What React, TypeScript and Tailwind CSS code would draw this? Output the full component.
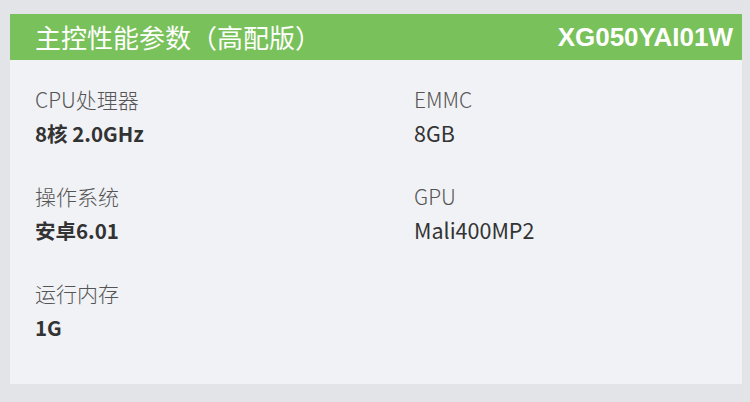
const specs = [
  { label: "CPU处理器", value: "8核 2.0GHz", bold: true },
  { label: "EMMC", value: "8GB", bold: false },
  { label: "操作系统", value: "安卓6.01", bold: true },
  { label: "GPU", value: "Mali400MP2", bold: false },
  { label: "运行内存", value: "1G", bold: true },
];

export default function App() {
  return (
    <div className="w-[750px] h-[402px] bg-[#e3e4e8] pt-[14px] pl-[10px] font-['Noto_Sans_CJK_SC',sans-serif]">
      <div className="w-[732px] h-[370px] bg-[#f1f2f6] flex flex-col">
        <div className="h-[46px] bg-[#79c15a] flex items-center justify-between pl-[25px] pr-[9px] text-white">
          <h1 className="text-[26px] leading-none">主控性能参数（高配版）</h1>
          <span className="text-[26px] leading-none font-bold font-['Liberation_Sans',Arial,sans-serif]">XG050YAI01W</span>
        </div>
        <div className="grid grid-cols-[379px_1fr] gap-y-[29px] pl-[25px] pt-[22px]">
          {specs.map((s) => (
            <div key={s.label} className="flex flex-col">
              <span className="text-[21px] leading-[34px] font-light text-[#555]">{s.label}</span>
              <span className={`leading-[34px] text-[#333] ${s.bold ? "text-[20.5px] font-bold" : "text-[21.5px]"}`}>{s.value}</span>
            </div>
          ))}
        </div>
      </div>
    </div>
  );
}
